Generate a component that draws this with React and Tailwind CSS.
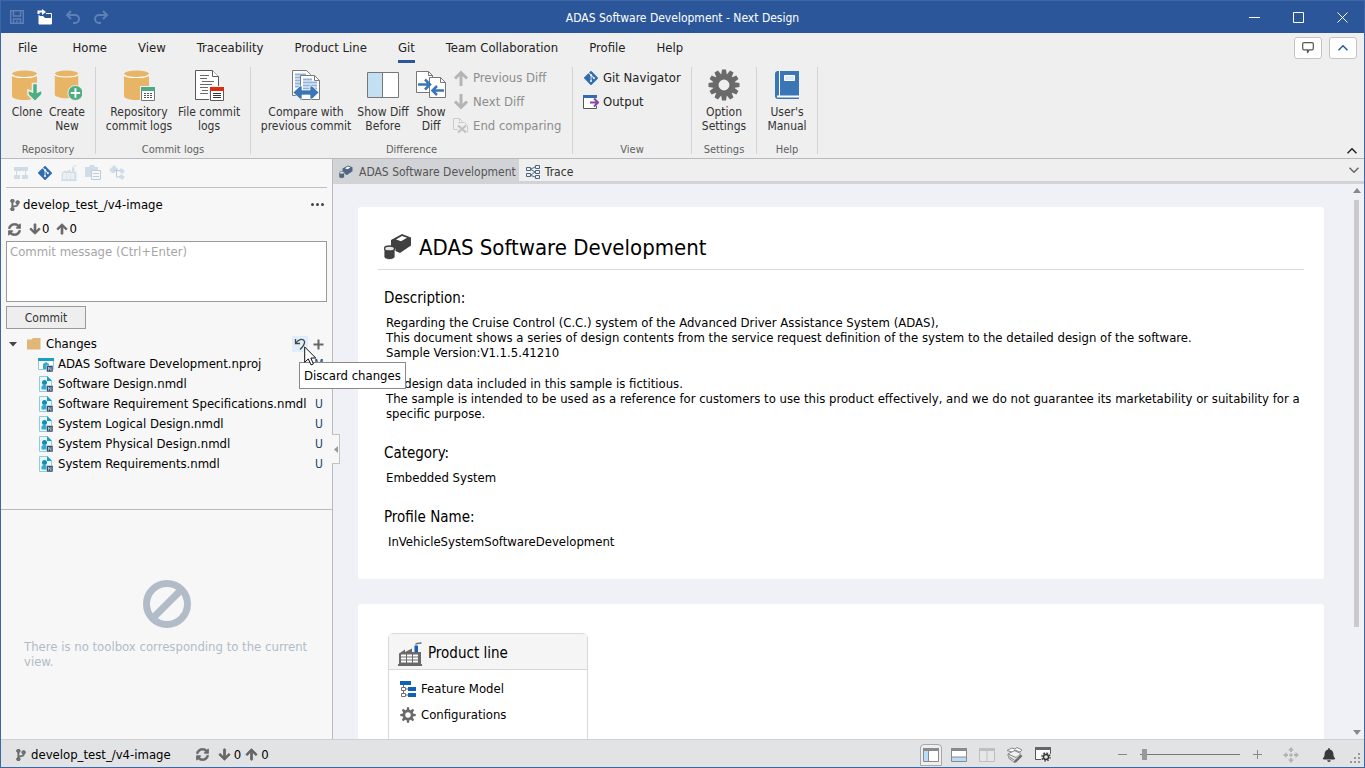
import React, { useState } from 'react';
import { FaGitAlt, FaCodeBranch, FaSyncAlt, FaArrowDown, FaArrowUp, FaBell } from 'react-icons/fa';

const MENU = ['File', 'Home', 'View', 'Traceability', 'Product Line', 'Git', 'Team Collaboration', 'Profile', 'Help'];

const FILES = [
  { name: 'ADAS Software Development.nproj', status: 'M', project: true },
  { name: 'Software Design.nmdl', status: 'U' },
  { name: 'Software Requirement Specifications.nmdl', status: 'U' },
  { name: 'System Logical Design.nmdl', status: 'U' },
  { name: 'System Physical Design.nmdl', status: 'U' },
  { name: 'System Requirements.nmdl', status: 'U' }
];

/* ---------- Icons ---------- */

const SaveIcon = () => (
  <svg width="16" height="16" viewBox="0 0 16 16" fill="none" stroke="#5f80b5" strokeWidth="1.500">
    <path d="M1.700 1.700h12.600v12.600H1.700z" />
    <path d="M4.500 2v5h7V2" />
    <path d="M4.500 14v-4h7v4M7 12.500h2" />
  </svg>
);

const OpenIcon = () => (
  <svg width="16" height="16" viewBox="0 0 16 16">
    <path d="M2 15.500V7h4l2 2h6.500v6.500z" fill="#fff" />
    <path d="M9 4.500h5.500V15" fill="none" stroke="#fff" />
    <path d="M1.500 5V2.500H5" fill="none" stroke="#fff" strokeWidth="2" />
    <path d="M5 0l4 3-4 3z" fill="#fff" />
    <path d="M2 6v9" stroke="#fff" />
  </svg>
);

const UndoIcon = ({ flip }) => (
  <svg width="16" height="16" viewBox="0 0 16 16" fill="none" stroke="#5f80b5" strokeWidth="2" className={flip ? '-scale-x-100' : ''}>
    <path d="M6 2L2 6l4 4" />
    <path d="M2.500 6H10a4 4 0 0 1 0 8H8" />
  </svg>
);

const Cylinder = () => (
  <>
    <path d="M1 5v22c0 2 5 4 12 4s13-2 13-4V5z" fill="#e8b566" />
    <ellipse cx="13.500" cy="5" rx="12.500" ry="3.500" fill="#e8b566" />
    <path d="M1 5.500c1 4 24 4 25 0" fill="none" stroke="#fff" strokeWidth="1.200" />
  </>
);

const CloneIcon = () => (
  <svg width="32" height="32" viewBox="0 0 32 32">
    <Cylinder />
    <path d="M21.500 14.500h5V23l4.500-2v4.500l-7 7-7-7V21l4.500 2z" fill="#4caf82" stroke="#efefef" strokeWidth="1.500" />
  </svg>
);

const CreateIcon = () => (
  <svg width="30" height="32" viewBox="-2 0 32 34">
    <Cylinder />
    <circle cx="23" cy="25.500" r="8" fill="#4caf82" stroke="#efefef" />
    <path d="M23 20.500v10M18 25.500h10" stroke="#fff" strokeWidth="2" />
  </svg>
);

const RepoLogIcon = () => (
  <svg width="32" height="33" viewBox="0 0 32 33">
    <Cylinder />
    <path d="M17 17h15v16H17z" fill="#efefef" />
    <path d="M18.500 18.500h13v13h-13z" fill="#fff" stroke="#777" />
    <path d="M18 18h14v4H18z" fill="#4fa886" />
    <path d="M21 24.500h9M21 26.500h9M21 28.500h9" stroke="#555" strokeDasharray="2 1" />
  </svg>
);

const FileLogIcon = () => (
  <svg width="30" height="33" viewBox="0 0 30 33">
    <path d="M1.500 1.500h17l6 6v23h-23z" fill="#fff" stroke="#5a5a5a" />
    <path d="M18.500 1.500v6h6" fill="#fff" stroke="#5a5a5a" />
    <path d="M6 6.500h9M6 9.500h7M8 12.500h12M6 15.500h12M6 18.500h8M8 21.500h6M6 24.500h8" stroke="#6a6a6a" />
    <path d="M15 17h15v16H15z" fill="#efefef" />
    <path d="M16.500 18.500h13v13h-13z" fill="#fff" stroke="#5a5a5a" />
    <path d="M16 18h14v4H16z" fill="#e02a10" />
    <path d="M19 24.500h8M19 26.500h8M19 28.500h8" stroke="#333" />
  </svg>
);

const CompareIcon = () => (
  <svg width="30" height="33" viewBox="0 0 30 33">
    <path d="M1.500 1.500h14l4 4v21h-18z" fill="#fff" stroke="#7a7a7a" />
    <path d="M4 5.500h11M4 8.500h5M4 11.500h5M4 14.500h5M4 17.500h5" stroke="#8fb3dc" strokeWidth="2" />
    <path d="M9.500 6.500h14l5 5v19h-19z" fill="#fff" stroke="#7a7a7a" />
    <path d="M23.500 6.500v5h5" fill="none" stroke="#7a7a7a" />
    <path d="M12 10.500h9M12 13.500h14M12 16.500h14M12 19.500h14" stroke="#8fb3dc" strokeWidth="2" />
    <path d="M2 23.500L9 17h2v4h8v-4h2l7 6.500-7 6.500h-2v-4h-8v4H9z" fill="#3a76b5" stroke="#fff" strokeWidth="0.700" />
  </svg>
);

const DiffBeforeIcon = () => (
  <svg width="32" height="32" viewBox="0 0 32 32">
    <path d="M.5 3.500h31v25H.5z" fill="#fff" stroke="#777" />
    <path d="M1 4h14v24H1z" fill="#c3dff2" />
    <path d="M15.500 3v26" stroke="#777" />
  </svg>
);

const ShowDiffIcon = () => (
  <svg width="32" height="32" viewBox="0 0 32 32">
    <path d="M1.500 2.500h12l4 4v17h-16z" fill="#fff" stroke="#777" />
    <path d="M13.500 2.500v4h4" fill="none" stroke="#777" />
    <path d="M14.500 8.500h11l5 5v15h-16z" fill="#fff" stroke="#777" />
    <path d="M25.500 8.500v5h5" fill="none" stroke="#777" />
    <path d="M3 15.500h10M10 10.500l5 5-5 5" fill="none" stroke="#3a76b5" strokeWidth="2.500" />
    <path d="M29 21.500H18M22 17l-4.500 4.500L22 26" fill="none" stroke="#3a76b5" strokeWidth="2.500" />
  </svg>
);

const DiffArrow = ({ down }) => (
  <svg width="16" height="16" viewBox="0 0 16 16" fill="none" stroke="#b5b5b5" strokeWidth="3" className={down ? 'rotate-180' : ''}>
    <path d="M8 16V2.500M2 8.500l6-6 6 6" />
  </svg>
);

const EndCompareIcon = () => (
  <svg width="16" height="16" viewBox="0 0 16 16" fill="none" stroke="#cbcbcb">
    <path d="M.5.5h6l3 3M.5.5v11H5M6.500.5v3M5.500 4.500h6l3 3v7" />
    <path d="M5 7.500l8 7M13 7.500l-8 7" stroke="#c0c0c0" strokeWidth="2.200" />
  </svg>
);

const OutputIcon = () => (
  <svg width="16" height="14" viewBox="0 0 16 14">
    <path d="M.5.5h13v13H.5z" fill="#fff" stroke="#555" />
    <path d="M0 0h14v3H0z" fill="#2f6db0" />
    <path d="M12 3h4v8h-4z" fill="#efefef" />
    <path d="M7 7.500h7M11 3.500l4 4-4 4" fill="none" stroke="#8445a3" strokeWidth="2" />
  </svg>
);

const Gear = ({ size, teeth, color = '#6a6a6a' }) => (
  <svg width={size} height={size} viewBox="-16 -16 32 32">
    {Array.from({ length: teeth }, (_, i) => (
      <path key={i} d="M-3-9l1-6.500h4L3-9z" fill={color} transform={`rotate(${(i * 360) / teeth})`} />
    ))}
    <circle r="8.200" fill="none" stroke={color} strokeWidth="5.500" />
  </svg>
);

const BookIcon = () => (
  <svg width="32" height="32" viewBox="0 0 32 32">
    <path d="M7 2h21v28H7a3 3 0 0 1-3-3V5a3 3 0 0 1 3-3z" fill="#3a76b5" />
    <path d="M8.500 2v25" stroke="#fff" />
    <path d="M6 27.500h22" stroke="#fff" strokeWidth="2" />
    <path d="M13.500 6.500h10v5h-10z" fill="#dfe9f5" stroke="#fff" />
  </svg>
);

const HierarchyIcon = () => (
  <svg width="16" height="16" viewBox="0 0 16 16" fill="#cfdde8">
    <path d="M1 2h14v4H1zM3 6h1v4H3zM12 6h1v4h-1zM1 10h6v4H1zM9 10h6v4H9z" />
  </svg>
);

const FactoryIcon = ({ size = 16, color = '#cfdde8', accent = '#cfdde8', line = '#f7f7f7' }) => (
  <svg width={size} height={size} viewBox="0 0 24 24">
    <path d="M1 22V11.500L7 7.500v2.500l7-3.500V10h9v12z" fill={color} />
    <path d="M0 22h24v2H0z" fill={color} />
    <path d="M16.500 3.500H20V10h-3.500z" fill={accent} />
    <path d="M17.500 2.500c1-1.500 3-1.500 6-1.500" stroke={color} strokeWidth="1.300" fill="none" />
    <path d="M3 12.500h17v2H3zM3 15.500h17v2H3zM3 18.500h17v2H3z" fill={line} />
    <path d="M8.500 12v9M14.500 12v9" stroke={color} />
  </svg>
);

const PasteIcon = () => (
  <svg width="16" height="16" viewBox="0 0 16 16">
    <path d="M0 2h4l1-2h4l1 2h3v10H0z" fill="#cfdde8" />
    <path d="M6.500 5.500h9v9h-9z" fill="#f7f7f7" stroke="#b9cddd" />
    <path d="M8 8.500h6M8 11.500h6" stroke="#b9cddd" />
  </svg>
);

const NodesIcon = () => (
  <svg width="16" height="16" viewBox="0 0 16 16" fill="#cfdde8">
    <path d="M5 0l4 4-4 4H3L0 5zM12 3l4 3-3 3-3-3zM12 9l4 3-3 3-3-3z" />
    <path d="M5 5.500h6M7.500 5.500v6.500H11" stroke="#b9cddd" fill="none" />
  </svg>
);

const ModelIcon = ({ size = 28, color = '#404040' }) => (
  <svg width={size} height={size} viewBox="0 0 28 28">
    <path d="M7 7L18 1l9 3.500v8L16 20l-9-4z" fill={color} />
    <path d="M12 6.500l6-3.500 5 1.800-6 3.500z" fill="#fff" />
    <path d="M0 15.500v8c0 4 11 4 11 0v-8z" fill={color} stroke="#fff" strokeWidth=".8" />
    <ellipse cx="5.500" cy="15.500" rx="5" ry="2.500" fill="#e6e6e6" stroke={color} strokeWidth="1.300" />
  </svg>
);

const TraceIcon = () => (
  <svg width="14" height="14" viewBox="0 0 14 14" fill="none" stroke="#4f6580">
    <path d="M.5 2.500h4v3h-4zM.5 8.500h4v3h-4zM9.500.5h4v3h-4zM9.500 5.500h4v3h-4zM9.500 10.500h4v3h-4zM5 4l4-2M5 4.500l4 2.500M5 10l4-3M5 10.500l4 1.500" />
  </svg>
);

const FolderIcon = () => (
  <svg width="14" height="12" viewBox="0 0 14 12">
    <path d="M0 1.500h4.500L6 0h7.500v11.500H0z" fill="#dfb777" />
  </svg>
);

const NBadge = () => (
  <>
    <path d="M8.500 9.500H15V16H8.500z" fill="#35506e" stroke="#f7f7f7" strokeWidth=".5" />
    <path d="M10.500 14.500v-3.500l2.500 3.500V11" fill="none" stroke="#c7d3e0" strokeWidth=".8" />
  </>
);

const ProjectFileIcon = () => (
  <svg width="16" height="16" viewBox="0 0 16 16">
    <path d="M.5 2.500h15v11H.5z" fill="#fff" stroke="#8ccbe0" />
    <path d="M0 2h16v3H0z" fill="#189fc6" />
    <path d="M5 13V8l3-2 3 2v5z" fill="#35a9cf" />
    <NBadge />
  </svg>
);

const ModelFileIcon = () => (
  <svg width="16" height="16" viewBox="0 0 16 16">
    <path d="M1.500.5h8l4 4v11h-12z" fill="#eef8fb" stroke="#8ccbe0" />
    <path d="M9 0l5 5H9z" fill="#189fc6" />
    <circle cx="6.500" cy="6.500" r="2.500" fill="#0f8fb8" />
    <path d="M3.500 13.500V10l3-1.500L9 10v3.500z" fill="#35a9cf" />
    <NBadge />
  </svg>
);

const DiscardIcon = () => (
  <svg width="12" height="12" viewBox="0 0 12 12" fill="none" stroke="#444" strokeWidth="1.300">
    <path d="M1.500 1v4.500H6" />
    <path d="M1.500 5.500C4 1.500 8.500 0 10.300 3c1.200 2.500-.8 5-4.300 8.500" />
  </svg>
);

const CursorIcon = () => (
  <svg width="13" height="20" viewBox="0 0 13 20">
    <path d="M.7 1v15.300l3.600-3.400 2.700 6 2.400-1-2.600-5.900h5z" fill="#fff" stroke="#111" />
  </svg>
);

const FeatureIcon = () => (
  <svg width="16" height="16" viewBox="0 0 16 16">
    <path d="M0 0h11v4H0zM8 6h8v4H8zM8 12h8v4H8z" fill="#0f62b8" />
    <path d="M3.500 4v2M3.500 10v2M6 8h2M6 14h2M1.500 6.500h4v3h-4zM1.500 12.500h4v3h-4z" fill="none" stroke="#707070" />
  </svg>
);

const PaneIcon = ({ kind }) => (
  <svg width="16" height="14" viewBox="0 0 16 14" opacity={kind === 'split' ? 0.4 : 1}>
    <path d="M.5.5h15v13H.5z" fill={kind === 'split' ? '#efefef' : '#fff'} stroke="#8a8a8a" />
    {kind === 'left' && <path d="M1 3h4v10H1z" fill="#b9ddf8" />}
    {kind === 'bottom' && <path d="M1 9h14v4H1z" fill="#b9ddf8" />}
    {kind === 'left' && <path d="M5.500 3v11" stroke="#8a8a8a" />}
    {kind === 'bottom' && <path d="M0 9h16" stroke="#8a8a8a" />}
    {kind === 'split' && <path d="M8 3v11" stroke="#8a8a8a" />}
    <path d="M0 0h16v3H0z" fill="#8a8a8a" />
  </svg>
);

const LayersIcon = () => (
  <svg width="18" height="18" viewBox="0 0 18 18" fill="#f2f2f2" stroke="#888">
    <path d="M2 8l6-3.500 7 3-5 4z" />
    <path d="M1 4.500L6 2l3 1 2-1.500 5 2.500-2 2-5-2-3 2z" fill="#fff" />
    <path d="M2 8v2l6 4M2 11.500l5 4" fill="none" />
    <path d="M7 15.500L14.500 8l2.500 2-7 7H7z" fill="#6f6f6f" stroke="#e2e3e5" strokeWidth=".8" />
  </svg>
);

const PaneSettingsIcon = () => (
  <svg width="18" height="16" viewBox="0 0 18 16">
    <path d="M.5.500h15v12H.5z" fill="#fff" stroke="#555" />
    <path d="M0 0h16v3H0z" fill="#666" />
    <circle cx="11" cy="10" r="5.500" fill="#e9eaeb" />
    <circle cx="11" cy="10" r="2.500" fill="none" stroke="#333" strokeWidth="1.400" />
    <circle cx="11" cy="10" r="4" fill="none" stroke="#333" strokeWidth="1.300" strokeDasharray="1.570 1.570" />
  </svg>
);

const MoveIcon = () => (
  <svg width="16" height="16" viewBox="0 0 16 16" fill="#b3b3b3">
    <path d="M8 0l3 3.500H9V5H7V3.500H5zM8 16l3-3.500H9V11H7v1.500H5zM0 8l3.500-3v2H5v2H3.500v2zM16 8l-3.500-3v2H11v2h1.500v2zM8 6l2 2-2 2-2-2z" />
  </svg>
);

const Chevron = ({ down, color = '#222', strokeWidth = 1.500 }) => (
  <svg width="10" height="6" viewBox="0 0 10 6" fill="none" stroke={color} strokeWidth={strokeWidth} className={down ? 'rotate-180' : ''}>
    <path d="M.5 5.300L5 .8l4.500 4.500" />
  </svg>
);

/* ---------- Ribbon ---------- */

const RibbonGroup = ({ label, className = '', children }) => (
  <section className="flex">
    <div className="flex flex-col justify-between">
      <div className={`flex ${className}`}>{children}</div>
      <h2 className="text-center text-[11px] leading-4 text-[#5f5f5f]">{label}</h2>
    </div>
    <div className="my-1 w-px bg-[#d3d3d5]" />
  </section>
);

const BigButton = ({ icon, lines, className = '' }) => (
  <button className={`flex flex-col items-center pt-1.5 text-xs leading-[14px] text-[#333] ${className}`}>
    <span className="flex h-9 items-start">{icon}</span>
    {lines.map((line) => (
      <span key={line} className="whitespace-nowrap">{line}</span>
    ))}
  </button>
);

const SmallButton = ({ icon, label, disabled }) => (
  <button disabled={disabled} className="flex h-6 items-center gap-1 whitespace-nowrap text-[13px] text-[#222] disabled:text-[#8c8c8c]">
    {icon}
    {label}
  </button>
);

const Ribbon = () => (
  <div className="flex h-[95px]">
    <RibbonGroup label="Repository" className="w-[94px]">
      <BigButton icon={<CloneIcon />} lines={['Clone']} className="ml-1.5 w-10" />
      <BigButton icon={<CreateIcon />} lines={['Create', 'New']} className="w-10" />
    </RibbonGroup>
    <RibbonGroup label="Commit logs" className="w-[154px] pl-2">
      <BigButton icon={<RepoLogIcon />} lines={['Repository', 'commit logs']} className="w-[70px]" />
      <BigButton icon={<FileLogIcon />} lines={['File commit', 'logs']} className="w-[70px]" />
    </RibbonGroup>
    <RibbonGroup label="Difference" className="w-[321px] pl-2">
      <BigButton icon={<CompareIcon />} lines={['Compare with', 'previous commit']} className="mr-0.5 w-[94px]" />
      <BigButton icon={<DiffBeforeIcon />} lines={['Show Diff', 'Before']} className="mr-0.5 w-14" />
      <BigButton icon={<ShowDiffIcon />} lines={['Show', 'Diff']} className="mr-1 w-9" />
      <div className="flex flex-col pt-[3px]">
        <SmallButton disabled icon={<DiffArrow />} label="Previous Diff" />
        <SmallButton disabled icon={<DiffArrow down />} label="Next Diff" />
        <SmallButton disabled icon={<EndCompareIcon />} label="End comparing" />
      </div>
    </RibbonGroup>
    <RibbonGroup label="View" className="w-[118px] pl-2.5">
      <div className="flex flex-col pt-[3px]">
        <SmallButton icon={<FaGitAlt className="size-4 text-[#2f6db0]" />} label="Git Navigator" />
        <SmallButton icon={<OutputIcon />} label="Output" />
      </div>
    </RibbonGroup>
    <RibbonGroup label="Settings" className="w-16">
      <BigButton icon={<Gear size={32} teeth={12} />} lines={['Option', 'Settings']} className="w-full" />
    </RibbonGroup>
    <RibbonGroup label="Help" className="w-[60px]">
      <BigButton icon={<BookIcon />} lines={["User's", 'Manual']} className="w-full" />
    </RibbonGroup>
    <button aria-label="Collapse ribbon" className="mr-[7px] ml-auto self-end pb-1">
      <Chevron />
    </button>
  </div>
);

const TitleBar = () => (
  <header className="grid h-8 shrink-0 grid-cols-[1fr_auto_1fr] items-center bg-[#2b579a] text-white">
    <div className="flex pl-0.5">
      <button aria-label="Save" className="flex w-7 justify-center"><SaveIcon /></button>
      <button aria-label="Open" className="flex w-7 justify-center"><OpenIcon /></button>
      <button aria-label="Undo" className="flex w-7 justify-center"><UndoIcon /></button>
      <button aria-label="Redo" className="flex w-7 justify-center"><UndoIcon flip /></button>
    </div>
    <h1 className="pt-0.5 text-xs">ADAS Software Development - Next Design</h1>
    <div className="flex justify-end">
      {[['Minimize', 'M0 5.500h11'], ['Maximize', 'M.5.500h10v10H.5z'], ['Close', 'M.5.500l10 10M10.500.5l-10 10']].map(([label, d]) => (
        <button key={label} aria-label={label} className="flex w-11 justify-center">
          <svg width="11" height="11" viewBox="0 0 11 11" fill="none" stroke="#fff"><path d={d} /></svg>
        </button>
      ))}
    </div>
  </header>
);

const MenuBar = ({ active, onSelect }) => (
  <nav className="flex h-[30px] items-start gap-px pl-[3px]">
    {MENU.map((item) => (
      <button key={item} onClick={() => onSelect(item)} className="flex h-full flex-col px-[15px] text-[13px] text-[#222] first:pr-[19px] first:pl-3.5">
        <span className={`flex h-full w-full items-center border-b-3 pt-0.5 ${item === active ? 'border-[#2b579a]' : 'border-transparent'}`}>{item}</span>
      </button>
    ))}
    <div className="mt-1 mr-[7px] ml-auto flex gap-[7px]">
      <button aria-label="Feedback" className="flex h-[22px] w-7 items-center justify-center rounded-[3px] border border-[#c4c4c4] bg-white">
        <svg width="12" height="12" viewBox="0 0 12 12" fill="none" stroke="#555" strokeWidth="1.200">
          <path d="M2 .700h8q1.300 0 1.300 1.300v4.500q0 1.300-1.300 1.300H7L5.500 11V7.800H2Q.7 7.800.7 6.500V2Q.7.700 2 .700z" />
        </svg>
      </button>
      <button aria-label="Collapse" className="flex h-[22px] w-7 items-center justify-center rounded-[3px] border border-[#c4c4c4] bg-white">
        <Chevron color="#2b579a" />
      </button>
    </div>
  </nav>
);

/* ---------- Left panel ---------- */

const GitPanel = () => {
  const [message, setMessage] = useState('');

  return (
    <aside className="relative z-10 flex w-[332px] shrink-0 flex-col border-r border-[#b9babd] bg-[#f7f7f7] text-[13px]">
      <div className="min-h-[350px]">
        <div className="mx-[5px] flex h-[29px] items-center border-b border-[#c0c0c0] pl-[3px]">
          <button aria-label="Model" className="flex w-6 justify-center"><HierarchyIcon /></button>
          <button aria-label="Git" className="flex w-6 justify-center"><FaGitAlt className="size-4 text-[#2f6db0]" /></button>
          <button aria-label="Product line" className="flex w-6 justify-center"><FactoryIcon /></button>
          <button aria-label="Clipboard" className="flex w-6 justify-center"><PasteIcon /></button>
          <button aria-label="Trace" className="flex w-6 justify-center"><NodesIcon /></button>
        </div>

        <div className="flex h-8 items-center pt-px pr-2 pl-2">
          <FaCodeBranch strokeWidth={30} className="size-3 text-[#6a6a6a]" />
          <span className="ml-0.5">develop_test_/v4-image</span>
          <button aria-label="More actions" className="ml-auto flex gap-[2px]">
            <span className="size-[3px] rounded-full bg-[#444]" />
            <span className="size-[3px] rounded-full bg-[#444]" />
            <span className="size-[3px] rounded-full bg-[#444]" />
          </button>
        </div>

        <div className="mb-[3px] flex h-[18px] items-center pl-[7px]">
          <button aria-label="Refresh"><FaSyncAlt strokeWidth={20} className="size-[13px] text-[#6a6a6a]" /></button>
          <FaArrowDown strokeWidth={30} className="ml-2 size-3 text-[#666]" />
          <span className="ml-px">0</span>
          <FaArrowUp strokeWidth={30} className="ml-[7px] size-3 text-[#666]" />
          <span className="ml-px">0</span>
        </div>

        <div className="px-[5px]">
          <textarea
            aria-label="Commit message"
            placeholder="Commit message (Ctrl+Enter)"
            value={message}
            onChange={(e) => setMessage(e.target.value)}
            className="block h-[61px] w-full resize-none border border-[#9a9a9a] bg-white px-[3px] py-[2px] leading-4 placeholder:text-[#a6a6a6]"
          />
          <button className="mt-1 block h-[23px] w-20 border border-[#9a9a9a] bg-[#eeeeee] text-xs text-[#333]">Commit</button>
        </div>

        <div className="mt-[5px] flex h-5 items-center pr-2 pl-2">
          <svg width="8" height="5" viewBox="0 0 8 5"><path d="M0 0h8L4 4.500z" fill="#444" /></svg>
          <span className="mr-[5px] ml-2.5"><FolderIcon /></span>
          Changes
          <div className="relative ml-auto">
            <button aria-label="Discard changes" className="flex size-4 items-center justify-center bg-[#dfeefa]"><DiscardIcon /></button>
            <div role="tooltip" className="absolute top-[26px] left-[7px] flex h-[27px] items-center border border-[#8a8a8a] bg-white px-1 whitespace-nowrap">
              Discard changes
            </div>
            <div className="absolute top-[10px] left-3"><CursorIcon /></div>
          </div>
          <button aria-label="Stage all" className="ml-[5px]">
            <svg width="11" height="11" viewBox="0 0 11 11"><path d="M5.500.5v10M.5 5.500h10" stroke="#666" strokeWidth="2" /></svg>
          </button>
        </div>
        <ul>
          {FILES.map((file) => (
            <li key={file.name} className="flex h-5 items-center pl-[37px]">
              {file.project ? <ProjectFileIcon /> : <ModelFileIcon />}
              <span className="ml-1 whitespace-nowrap">{file.name}</span>
              <span className="mr-[5px] ml-auto w-4 text-center text-xs text-[#24466b]">{file.status}</span>
            </li>
          ))}
        </ul>
      </div>

      <div className="flex-1 border-t border-[#b9babd] px-[23px] pt-[70px] text-[#b1bcc8]">
        <svg width="48" height="48" viewBox="0 0 48 48" className="mx-auto" fill="none" stroke="#b1bcc8" strokeWidth="7">
          <circle cx="24" cy="24" r="20.500" />
          <path d="M10 38L38 10" />
        </svg>
        <p className="mt-[11px] leading-[15px]">There is no toolbox corresponding to the current view.</p>
      </div>

      <button aria-label="Collapse panel" className="absolute top-[275px] left-full flex h-[30px] w-2 items-center justify-center border border-l-0 border-[#c4c4c4] bg-[#f7f7f7]">
        <svg width="4" height="7" viewBox="0 0 4 7"><path d="M4 0v7L0 3.500z" fill="#999" /></svg>
      </button>
    </aside>
  );
};

/* ---------- Document area ---------- */

const Field = ({ label, className = '', children }) => (
  <section className="pb-[22px]">
    <h3 className="pl-1.5 text-[15px] leading-5">{label}</h3>
    <div className={`mt-[7px] leading-[15px] ${className}`}>{children}</div>
  </section>
);

const Editor = () => (
  <main className="flex min-w-0 flex-1 flex-col bg-[#eff1f6]">
    <div className="flex h-[25px] shrink-0 border-b-3 border-[#d2d3d7] bg-[#efefef] text-xs text-[#333]">
      <button className="-mb-[3px] flex items-center gap-1.5 bg-[#d2d3d7] pr-[3px] pl-1.5 text-[#555]">
        <ModelIcon size={14} color="#4f6580" />
        ADAS Software Development
      </button>
      <button className="flex items-center gap-[5px] pt-[3px] pl-[7px]">
        <TraceIcon />
        Trace
      </button>
      <button aria-label="Tab list" className="mr-[5px] ml-auto"><Chevron down color="#666" /></button>
    </div>

    <div className="flex min-h-0 flex-1">
      <div className="flex-1 overflow-hidden px-[25px] pt-[23px] text-[13px] text-black">
        <article className="mb-[25px] rounded-[3px] bg-white px-5 pb-2">
          <div className="flex h-[63px] items-center border-b border-[#dadada] pt-[18px] pl-1.5">
            <ModelIcon />
            <h2 className="ml-[7px] text-[22px]">ADAS Software Development</h2>
          </div>
          <div className="pt-[18px]">
            <Field label="Description:" className="pl-2">
              <p>
                Regarding the Cruise Control (C.C.) system of the Advanced Driver Assistance System (ADAS),<br />
                This document shows a series of design contents from the service request definition of the system to the detailed design of the software.<br />
                Sample Version:V1.1.5.41210
              </p>
              <p className="mt-4">
                All design data included in this sample is fictitious.<br />
                The sample is intended to be used as a reference for customers to use this product effectively, and we do not guarantee its marketability or suitability for a specific purpose.
              </p>
            </Field>
            <Field label="Category:" className="pl-2">Embedded System</Field>
            <Field label="Profile Name:" className="pl-2.5">InVehicleSystemSoftwareDevelopment</Field>
          </div>
        </article>

        <article className="rounded-[3px] bg-white px-[30px] pt-[29px] pb-10">
          <div className="w-[200px] rounded-t-[5px] border border-[#d8d8d8]">
            <h3 className="flex h-9 items-center gap-1.5 border-b border-[#d8d8d8] bg-[#f5f5f5] pt-1 pl-[9px] text-[15px]">
              <FactoryIcon size={24} color="#6a6a6a" accent="#0f62b8" line="#fff" />
              Product line
            </h3>
            <div className="flex flex-col pt-1.5 pb-6 pl-[11px]">
              <a href="#feature-model" className="flex h-[26px] items-center gap-[5px]"><FeatureIcon />Feature Model</a>
              <a href="#configurations" className="flex h-[26px] items-center gap-[5px]"><Gear size={16} teeth={8} />Configurations</a>
            </div>
          </div>
        </article>
      </div>

      <div className="flex w-[15px] flex-col items-center pt-1 pb-1">
        <svg width="8" height="5" viewBox="0 0 8 5"><path d="M0 5h8L4 0z" fill="#888" /></svg>
        <div className="mt-[7px] h-[427px] w-[5px] bg-[#cacaca]" />
        <svg width="8" height="5" viewBox="0 0 8 5" className="mt-auto"><path d="M0 0h8L4 5z" fill="#888" /></svg>
      </div>
    </div>
  </main>
);

const StatusBar = () => {
  const [zoom, setZoom] = useState(2);

  return (
    <footer className="flex h-7 shrink-0 items-center border-t border-[#cfd0d2] bg-[#e2e3e5] pt-0.5 text-[13px]">
      <FaCodeBranch strokeWidth={30} className="ml-3.5 size-3 text-[#6a6a6a]" />
      <span className="ml-1">develop_test_/v4-image</span>
      <button aria-label="Refresh" className="ml-[25px]"><FaSyncAlt strokeWidth={20} className="size-[13px] text-[#6a6a6a]" /></button>
      <FaArrowDown strokeWidth={30} className="ml-[9px] size-[13px] text-[#666]" />
      <span className="ml-[3px]">0</span>
      <FaArrowUp strokeWidth={30} className="ml-1 size-[13px] text-[#666]" />
      <span className="ml-[3px]">0</span>

      <div className="ml-auto flex items-center">
        <button aria-label="Left pane" className="flex h-[22px] w-[22px] items-center justify-center rounded-t-sm border border-[#a8a8a8] bg-[#efeff0]"><PaneIcon kind="left" /></button>
        <button aria-label="Bottom pane" className="ml-1.5 flex w-[22px] justify-center"><PaneIcon kind="bottom" /></button>
        <button aria-label="Split pane" disabled className="ml-1.5 flex w-[22px] justify-center"><PaneIcon kind="split" /></button>
        <button aria-label="Layers" className="ml-1.5 flex w-[22px] justify-center"><LayersIcon /></button>
        <button aria-label="Pane settings" className="ml-[7px] flex w-[22px] justify-center"><PaneSettingsIcon /></button>
        <button aria-label="Zoom out" className="ml-[63px]">
          <svg width="9" height="9" viewBox="0 0 9 9"><path d="M0 4.500h9" stroke="#888" /></svg>
        </button>
        <input
          type="range"
          aria-label="Zoom"
          value={zoom}
          onChange={(e) => setZoom(e.target.value)}
          className="mx-[13px] h-px w-[100px] appearance-none bg-[#777] [&::-webkit-slider-thumb]:h-[11px] [&::-webkit-slider-thumb]:w-[5px] [&::-webkit-slider-thumb]:appearance-none [&::-webkit-slider-thumb]:bg-[#999]"
        />
        <button aria-label="Zoom in">
          <svg width="9" height="9" viewBox="0 0 9 9"><path d="M0 4.500h9M4.500 0v9" stroke="#888" /></svg>
        </button>
        <button aria-label="Fit" className="ml-[21px]"><MoveIcon /></button>
        <button aria-label="Notifications" className="ml-[23px]"><FaBell className="size-3.5 text-[#3a3a3a]" /></button>
        <svg width="12" height="12" viewBox="0 0 12 12" fill="#999" className="mt-2 mr-[2px] ml-3.5">
          <path d="M8 0h2v2H8zM4 4h2v2H4zM8 4h2v2H8zM0 8h2v2H0zM4 8h2v2H4zM8 8h2v2H8z" />
        </svg>
      </div>
    </footer>
  );
};

export default function App() {
  const [tab, setTab] = useState('Git');

  return (
    <div className="flex h-screen flex-col overflow-hidden border border-[#3c66a4] bg-[#efefef] font-['DejaVu_Sans_Condensed','DejaVu_Sans',sans-serif] text-black">
      <TitleBar />
      <div className="shrink-0 border-b border-[#b9babd]">
        <MenuBar active={tab} onSelect={setTab} />
        <Ribbon />
      </div>
      <div className="flex min-h-0 flex-1">
        <GitPanel />
        <Editor />
      </div>
      <StatusBar />
    </div>
  );
}
